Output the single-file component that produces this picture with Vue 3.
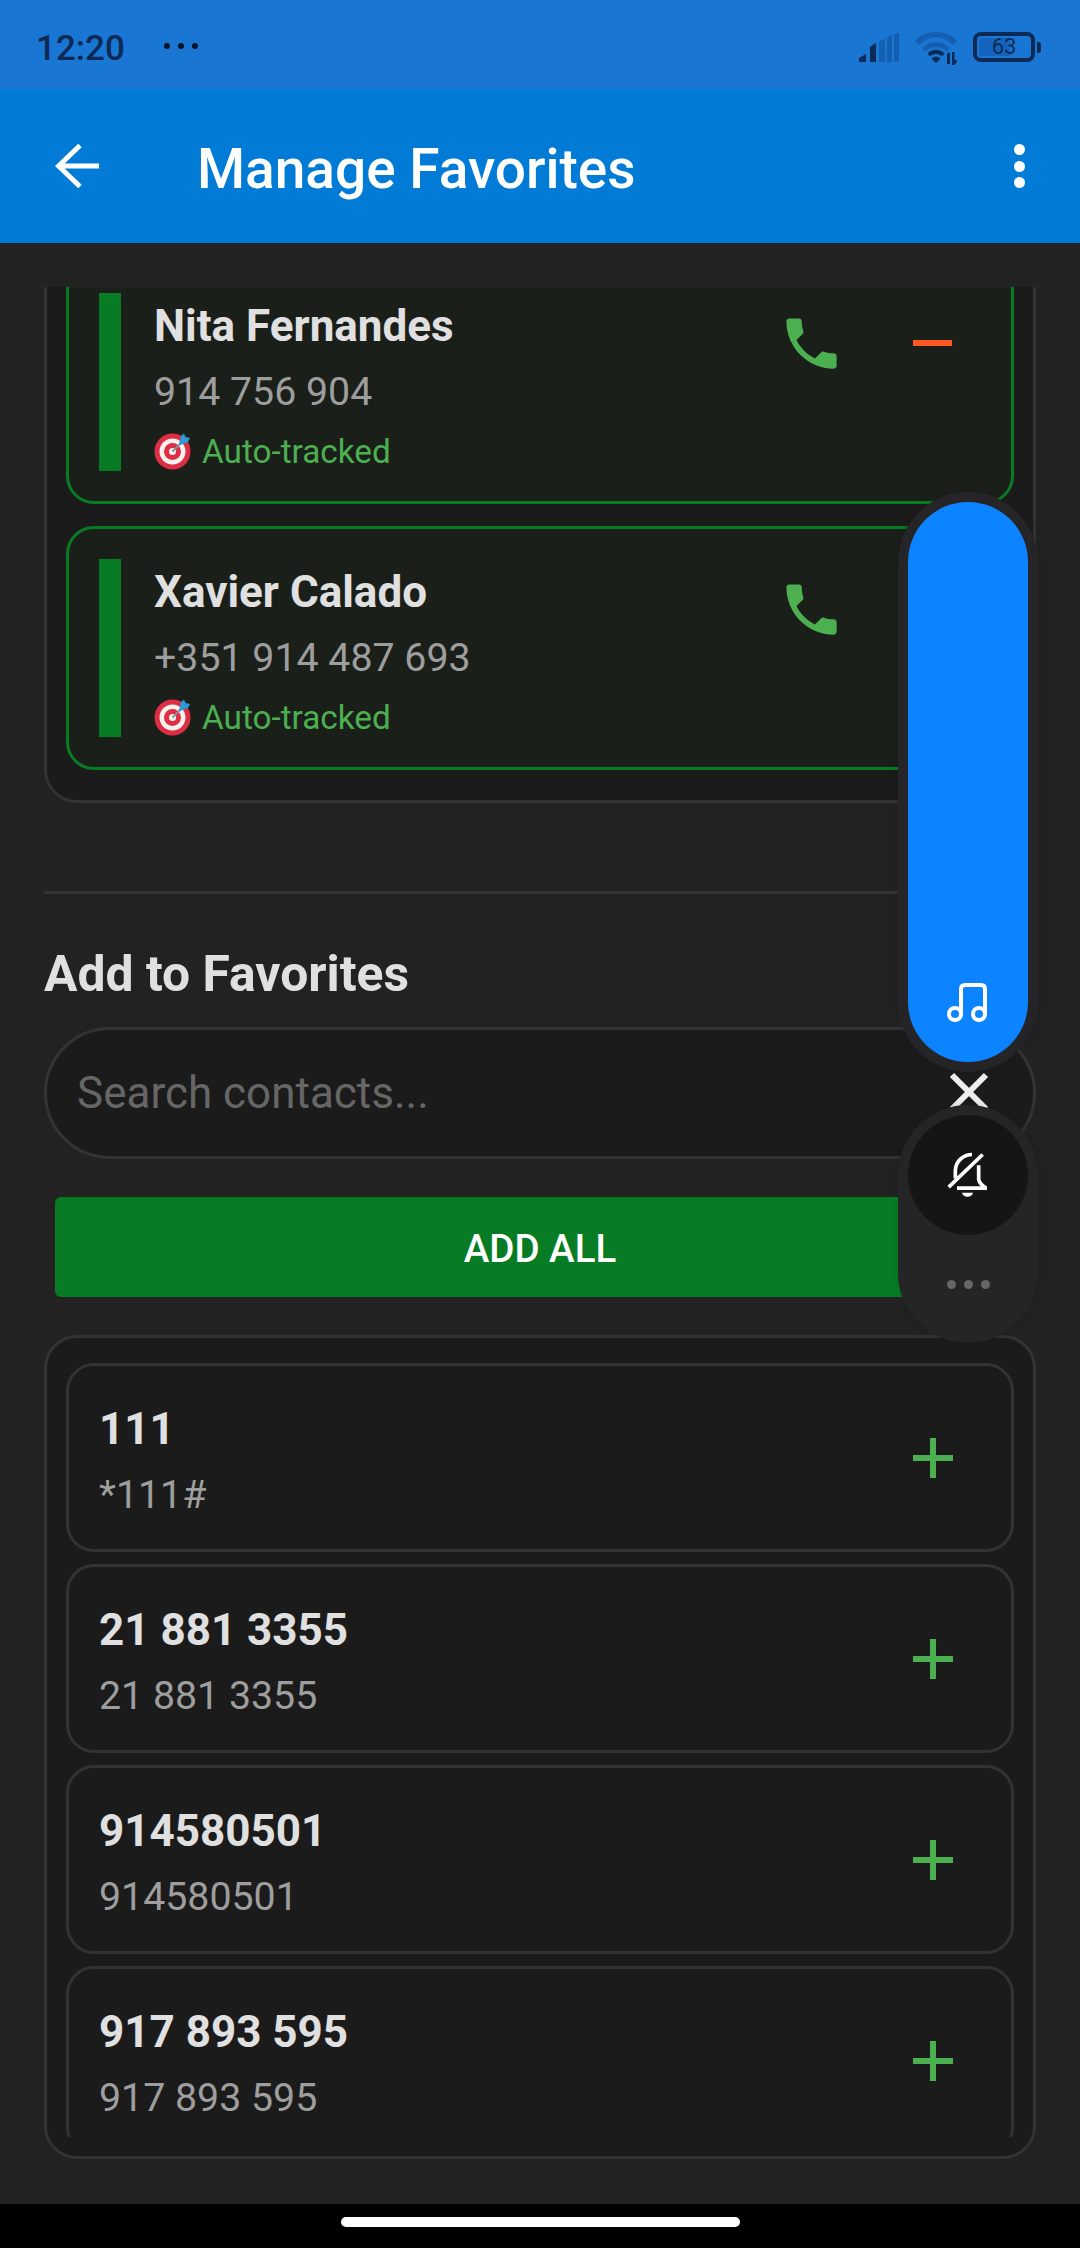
<script setup>
import { ref } from 'vue'

const favorites = ref([
  { name: 'Nita Fernandes', phone: '914 756 904' },
  { name: 'Xavier Calado', phone: '+351 914 487 693' }
])

const contacts = ref([
  { name: '111', phone: '*111#' },
  { name: '21 881 3355', phone: '21 881 3355' },
  { name: '914580501', phone: '914580501' },
  { name: '917 893 595', phone: '917 893 595' }
])

const search = ref('')
const callPath = 'M6.62 10.79c1.44 2.83 3.76 5.14 6.59 6.59l2.2-2.2c.27-.27.67-.36 1.02-.24 1.12.37 2.33.57 3.57.57.55 0 1 .45 1 1V20c0 .55-.45 1-1 1-9.39 0-17-7.61-17-17 0-.55.45-1 1-1h3.5c.55 0 1 .45 1 1 0 1.25.2 2.45.57 3.57.11.35.03.74-.25 1.02l-2.2 2.2z'
</script>

<template>
  <div class="screen">
    <div class="status-bar">
      <span class="time">12:20</span>
      <div class="status-dots"><i></i><i></i><i></i></div>
      <div class="status-right">
        <svg class="signal" width="40" height="29" viewBox="0 0 40 29">
          <path class="on" d="M0 29v-4l7-4v8zM11 29V14l6-4v19z" />
          <path class="off" d="M20 29V9l6-3.5V29zM28 29V4.500l5-3V29zM35 29V1l5-1v29z" />
        </svg>
        <svg class="wifi" width="44" height="34" viewBox="0 0 44 34">
          <path class="off" d="M0 9C10-3 32-3 42 9l-4 4C29 3 13 3 4 13z" />
          <path class="off" d="M7 16c8-8 20-8 28 0l-3 3.500c-6-6-16-6-22 0z" />
          <path class="on" d="M12.500 21.500c5-5 12-5 17 0l-3 3c-3.500-3.200-7.500-3.200-11 0zM16.500 26.500c3-2.500 6-2.500 9 0L21 31z" />
          <path class="on" d="M32 22l3-2v12h-3zM37 20h2.500v8l3 .5-3 4.500H37z" />
        </svg>
        <div class="battery">
          <span class="battery-level">63</span>
          <i class="battery-nub"></i>
        </div>
      </div>
    </div>

    <header class="app-bar">
      <svg class="back" width="44" height="44" viewBox="0 0 44 44">
        <path d="M44 22H3M25 1.500L3.500 22 25 42.500" />
      </svg>
      <h1 class="title">Manage Favorites</h1>
      <div class="menu"><i></i><i></i><i></i></div>
    </header>

    <main class="content">
      <div class="scroller">
        <section class="panel fav-panel">
          <div v-for="fav in favorites" :key="fav.name" class="fav-card">
            <div class="fav-bar"></div>
            <div class="fav-info">
              <div class="name">{{ fav.name }}</div>
              <div class="phone">{{ fav.phone }}</div>
              <div class="tracked">
                <svg width="37" height="37" viewBox="0 0 37 37">
                  <circle cx="18.500" cy="18.500" r="18" fill="#dd2e44" />
                  <circle cx="18.500" cy="18.500" r="13" fill="#f5f1ee" />
                  <circle cx="18.500" cy="18.500" r="8.500" fill="#dd2e44" />
                  <circle cx="18.500" cy="18.500" r="3.500" fill="#f5f1ee" />
                  <path d="M18.500 18.500L28 9" stroke="#8a8f96" stroke-width="2" />
                  <path d="M25 11L27 3 30 .5 31.500 4 36 5 34 9 26 12z" fill="#2a9ad6" />
                </svg>
                <span>Auto-tracked</span>
              </div>
            </div>
            <div class="action">
              <svg width="67" height="67" viewBox="0 0 24 24"><path :d="callPath" fill="#4caf50" /></svg>
            </div>
            <div class="action">
              <i class="minus"></i>
            </div>
          </div>
        </section>

        <div class="divider"></div>
        <h2 class="section-title">Add to Favorites</h2>

        <input v-model="search" class="search" type="text" placeholder="Search contacts..." />
        <button class="add-all">ADD ALL</button>

        <section class="panel list-panel">
          <div class="list-clip">
            <div v-for="c in contacts" :key="c.name" class="contact">
              <div class="contact-info">
                <div class="name">{{ c.name }}</div>
                <div class="phone">{{ c.phone }}</div>
              </div>
              <div class="plus"><i></i></div>
            </div>
          </div>
        </section>
      </div>
    </main>

    <div class="nav-bar"><div class="home-pill"></div></div>

    <!-- floating sound panel, drawn by the system over the app -->
    <svg class="float-close" width="40" height="40" viewBox="0 0 40 40">
      <path d="M3 3l34 34M37 3L3 37" />
    </svg>
    <div class="float-capsule float-top">
      <div class="volume-pill">
        <svg width="46" height="44" viewBox="944 980 46 44">
          <path d="M960 1014V989q0-4 4-4h16q4 0 4 4v25" />
          <circle cx="954" cy="1014" r="6" />
          <circle cx="978" cy="1014" r="6" />
        </svg>
      </div>
    </div>
    <div class="float-capsule float-bottom">
      <div class="mute-circle">
        <svg width="42" height="49" viewBox="260 630 126 146">
          <path d="M285 712V690C285 655 315 640 335 640M355 672V715C358 728 368 735 376 740M290 741H380M265 738L367 640" />
          <path class="clapper" d="M305 755H338C335 771 308 771 305 755z" />
        </svg>
      </div>
      <div class="more-dots"><i></i><i></i><i></i></div>
    </div>
  </div>
</template>

<style scoped>
.screen {
  position: relative;
  width: 1080px;
  height: 2248px;
  display: flex;
  flex-direction: column;
  overflow: hidden;
  background: #222;
  font-family: Roboto, "Liberation Sans", sans-serif;
}

/* status bar */
.status-bar {
  height: 89px;
  flex: none;
  display: flex;
  align-items: center;
  padding: 8px 39px 0 36px;
  box-sizing: border-box;
  background: #1976d2;
  color: #0c2a55;
}

.time {
  font-size: 35px;
  font-weight: 500;
  line-height: 41px;
}

.status-dots {
  display: flex;
  gap: 8px;
  margin: -6px 0 0 39px;
}

.status-dots i {
  width: 6px;
  height: 6px;
  border-radius: 50%;
  background: #04122a;
}

.status-right {
  margin-left: auto;
  margin-top: -3px;
  display: flex;
  align-items: center;
}

.signal .on,
.wifi .on {
  fill: #0c2a55;
}

.signal .off,
.wifi .off {
  fill: #145fb0;
}

.wifi {
  margin: 4px 0 0 16px;
}

.battery {
  position: relative;
  width: 62px;
  height: 30px;
  margin: 0 6px 0 14px;
  box-sizing: border-box;
  border: 4px solid #0c2a55;
  border-radius: 8px;
  background: linear-gradient(90deg, #1464be 0, #1464be 62%, transparent 62%);
  background-clip: content-box;
  padding: 2px;
  display: flex;
  align-items: center;
  justify-content: center;
}

.battery-level {
  font-size: 22px;
  line-height: 22px;
  color: #0c2a55;
}

.battery-nub {
  position: absolute;
  right: -10px;
  top: 6px;
  width: 4px;
  height: 11px;
  border-radius: 0 3px 3px 0;
  background: #0c2a55;
}

/* app bar */
.app-bar {
  height: 154px;
  flex: none;
  display: flex;
  align-items: center;
  padding: 0 55px;
  box-sizing: border-box;
  background: #027bd6;
}

.back {
  flex: none;
}

.back path {
  fill: none;
  stroke: #fff;
  stroke-width: 5;
}

.title {
  margin: 6px 0 0 98px;
  color: #fff;
  font-size: 55px;
  font-weight: 500;
  line-height: 60px;
}

.menu {
  margin-left: auto;
  display: flex;
  flex-direction: column;
  gap: 5.500px;
}

.menu i {
  width: 11px;
  height: 11px;
  border-radius: 50%;
  background: #fff;
}

/* content */
.content {
  flex: 1;
  min-height: 0;
  padding: 44px 44px 0;
  box-sizing: border-box;
}

.scroller {
  height: 100%;
  overflow: hidden;
}

.panel {
  box-sizing: border-box;
  border: 3px solid #333;
  border-radius: 33px;
  background: #1b1b1b;
}

.fav-panel {
  margin-top: -49px;
  padding: 19px 19px 30px;
  display: flex;
  flex-direction: column;
  gap: 22px;
}

.fav-card {
  height: 244px;
  flex: none;
  display: flex;
  align-items: flex-start;
  box-sizing: border-box;
  padding: 30px 18px 30px 30px;
  border: 3px solid #087c24;
  border-radius: 28px;
  background: #1b1f1a;
}

.fav-bar {
  width: 22px;
  height: 178px;
  flex: none;
  background: #087c24;
}

.fav-info {
  flex: 1;
  padding: 7px 0 0 33px;
}

.name {
  color: #e0e0e0;
  font-size: 44px;
  font-weight: 700;
  line-height: 52px;
}

.phone {
  margin-top: 18px;
  color: #9e9e9e;
  font-size: 39.300px;
  line-height: 45px;
}

.tracked {
  display: flex;
  align-items: center;
  gap: 11px;
  margin-top: 17px;
  height: 39px;
  color: #4caf50;
  font-size: 33.300px;
}

.action {
  width: 121px;
  height: 100px;
  flex: none;
  display: flex;
  align-items: center;
  justify-content: center;
}

.minus {
  width: 39px;
  height: 6px;
  background: #ff5722;
}

.divider {
  height: 3px;
  margin-top: 88px;
  background: #333;
}

.section-title {
  margin: 51px 0 24px;
  color: #e0e0e0;
  font-size: 49.800px;
  font-weight: 700;
  line-height: 58px;
}

.search {
  display: block;
  width: 100%;
  height: 132px;
  box-sizing: border-box;
  padding: 0 30px;
  border: 3px solid #333;
  border-radius: 66px;
  outline: none;
  background: #1b1b1b;
  color: #e0e0e0;
  font-family: inherit;
  font-size: 44px;
}

.search::placeholder {
  color: #666;
  opacity: 1;
}

.add-all {
  display: block;
  width: 970px;
  height: 100px;
  margin: 38px 11px;
  padding: 2px 0 0;
  border: none;
  border-radius: 6px;
  background: #087c24;
  color: #fff;
  font-family: inherit;
  font-size: 38.500px;
  font-weight: 500;
}

.list-panel {
  height: 824px;
  padding: 25px 19px 19px;
  overflow: hidden;
}

.list-clip {
  height: 774px;
  overflow: hidden;
  display: flex;
  flex-direction: column;
  gap: 12px;
}

.contact {
  height: 189px;
  flex: none;
  display: flex;
  align-items: center;
  box-sizing: border-box;
  padding-right: 18px;
  border: 3px solid #333;
  border-radius: 28px;
}

.contact-info {
  flex: 1;
  padding: 6px 0 0 30px;
}

.plus {
  position: relative;
  width: 121px;
  height: 40px;
  flex: none;
  display: flex;
  justify-content: center;
}

.plus i {
  width: 6px;
  height: 40px;
  background: #4caf50;
}

.plus::after {
  content: "";
  position: absolute;
  left: 40.500px;
  top: 17px;
  width: 40px;
  height: 6px;
  background: #4caf50;
}

/* bottom nav */
.nav-bar {
  height: 44px;
  flex: none;
  display: flex;
  justify-content: center;
  padding-top: 13px;
  box-sizing: border-box;
  background: #000;
}

.home-pill {
  width: 399px;
  height: 10px;
  border-radius: 5px;
  background: #fff;
}

/* floating panel */
.float-capsule {
  position: absolute;
  left: 898px;
  width: 140px;
  box-sizing: border-box;
  padding: 10px;
  border-radius: 70px;
  background: #252527;
  box-shadow: 0 0 10px rgba(0, 0, 0, 0.12);
}

.float-top {
  top: 492px;
  height: 580px;
}

.volume-pill {
  height: 100%;
  border-radius: 60px;
  background: #0d84ff;
  display: flex;
  justify-content: center;
  align-items: flex-end;
  padding-bottom: 38px;
  box-sizing: border-box;
}

.volume-pill svg {
  fill: none;
  stroke: #fff;
  stroke-width: 4;
}

.float-close {
  position: absolute;
  left: 949px;
  top: 1072px;
}

.float-close path {
  fill: none;
  stroke: #eee;
  stroke-width: 6;
}

.float-bottom {
  top: 1105px;
  height: 238px;
}

.mute-circle {
  width: 120px;
  height: 120px;
  border-radius: 50%;
  background: #151515;
  display: flex;
  align-items: center;
  justify-content: center;
}

.mute-circle svg {
  fill: none;
  stroke: #fff;
  stroke-width: 11;
}

.mute-circle .clapper {
  fill: #fff;
  stroke: none;
}

.more-dots {
  display: flex;
  justify-content: center;
  gap: 8px;
  margin-top: 45px;
}

.more-dots i {
  width: 9px;
  height: 9px;
  border-radius: 50%;
  background: #666;
}
</style>
